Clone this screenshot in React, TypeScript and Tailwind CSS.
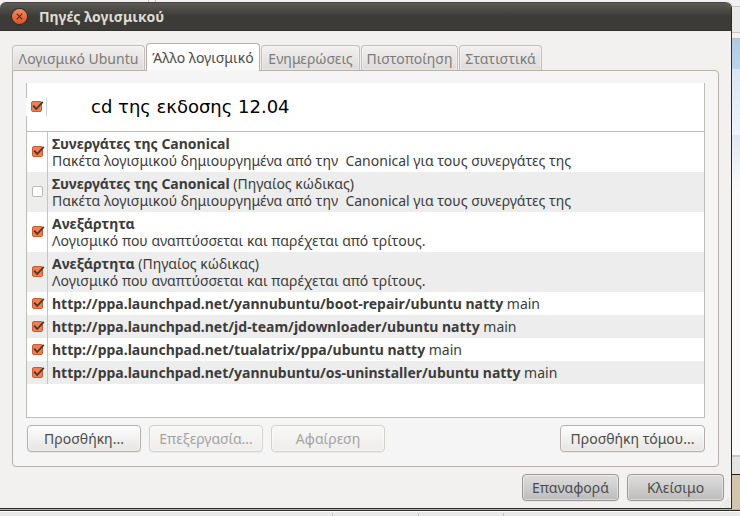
import React, { useState } from 'react';
import clsx from 'clsx';

interface Source {
  id: string;
  title: string;
  suffix?: string;
  description?: string;
  enabled: boolean;
}

const initialSources: Source[] = [
  { id: 'partner', title: 'Συνεργάτες της Canonical', description: 'Πακέτα λογισμικού δημιουργημένα από την  Canonical για τους συνεργάτες της', enabled: true },
  { id: 'partner-src', title: 'Συνεργάτες της Canonical', suffix: '(Πηγαίος κώδικας)', description: 'Πακέτα λογισμικού δημιουργημένα από την  Canonical για τους συνεργάτες της', enabled: false },
  { id: 'independent', title: 'Ανεξάρτητα', description: 'Λογισμικό που αναπτύσσεται και παρέχεται από τρίτους.', enabled: true },
  { id: 'independent-src', title: 'Ανεξάρτητα', suffix: '(Πηγαίος κώδικας)', description: 'Λογισμικό που αναπτύσσεται και παρέχεται από τρίτους.', enabled: true },
  { id: 'boot-repair', title: 'http://ppa.launchpad.net/yannubuntu/boot-repair/ubuntu natty', suffix: 'main', enabled: true },
  { id: 'jdownloader', title: 'http://ppa.launchpad.net/jd-team/jdownloader/ubuntu natty', suffix: 'main', enabled: true },
  { id: 'tualatrix', title: 'http://ppa.launchpad.net/tualatrix/ppa/ubuntu natty', suffix: 'main', enabled: true },
  { id: 'os-uninstaller', title: 'http://ppa.launchpad.net/yannubuntu/os-uninstaller/ubuntu natty', suffix: 'main', enabled: true },
];

const tabs = [
  { name: 'Λογισμικό Ubuntu', width: 'w-[133px]' },
  { name: 'Άλλο λογισμικό', width: 'w-[114px]' },
  { name: 'Ενημερώσεις', width: 'w-[99px]' },
  { name: 'Πιστοποίηση', width: 'w-[97px]' },
  { name: 'Στατιστικά', width: 'w-[83px]' },
];

interface CheckProps {
  id: string;
  checked: boolean;
  onChange: () => void;
}

const Check: React.FC<CheckProps> = ({ id, checked, onChange }) => (
  <span className="grid w-3 h-3">
    <input
      id={id}
      type="checkbox"
      checked={checked}
      onChange={onChange}
      className="[grid-area:1/1] appearance-none w-[11px] h-[11px] rounded-[2px] border border-[#bdb9b3] bg-white checked:border-[#d0592f] checked:bg-[#f37d50]"
    />
    {checked && (
      <svg viewBox="0 0 12 12" className="[grid-area:1/1] w-3 h-3 overflow-visible pointer-events-none" fill="none">
        <path d="M2.2 4.6 L5.2 8 L11.8 0.8" stroke="#3c3b37" strokeWidth="1.8" />
      </svg>
    )}
  </span>
);

interface PushButtonProps {
  children: React.ReactNode;
  className: string;
  disabled?: boolean;
}

const PushButton: React.FC<PushButtonProps> = ({ children, className, disabled }) => (
  <button
    type="button"
    disabled={disabled}
    className={clsx('h-[27px] rounded-[4px] border text-center whitespace-nowrap shadow-[inset_0_0_0_1px_#ffffff66,0_1px_1px_#0000000d]', className)}
  >
    {children}
  </button>
);

const normal = 'border-[#b4b0ab] bg-linear-to-b from-[#fdfdfd] to-[#e6e5e3] text-[#4c4c4c]';
const faded = 'border-[#d3d1ce] bg-linear-to-b from-[#f8f8f7] to-[#eeedeb] text-[#a3a3a3]';
const dark = 'border-[#9b9997] bg-linear-to-b from-[#dedede] to-[#bcbcbc] text-[#4c4c4c]';

const App: React.FC = () => {
  const [sources, setSources] = useState(initialSources);
  const [cdEnabled, setCdEnabled] = useState(true);
  const [active, setActive] = useState(1);

  const toggle = (id: string) => {
    setSources(sources.map(s => s.id === id ? { ...s, enabled: !s.enabled } : s));
  };

  return (
    <div className="min-h-screen flex flex-col bg-[#e8e8e8] font-['Noto_Sans',sans-serif] text-sm leading-[17px] text-[#3c3c3c]">
      {/* edge of the window behind */}
      <div className="h-0.5 flex bg-[#f2f1f0]">
        <span className="ml-[148px] w-2 border-x border-[#c8c6c3]" />
      </div>

      <div className="flex-1 flex bg-[#f2f1f0]">
        <main className="flex-1 min-w-0 flex flex-col rounded-t-md border-r border-b border-[#2b2a27] bg-[#f2f1ef]">
          <header className="h-[29px] flex items-center gap-3 pl-3 rounded-t-md border-t border-b border-t-[#464540] border-b-[#33322e] bg-linear-to-b from-[#5c5b55] to-[#3c3b37] to-50%">
            <button
              type="button"
              aria-label="Κλείσιμο παραθύρου"
              className="w-[15px] h-[15px] grid place-items-center rounded-full bg-linear-to-b from-[#f58a62] to-[#e1501e] shadow-[0_0_0_1px_#2f2e2a]"
            >
              <svg viewBox="0 0 7 7" className="w-[7px] h-[7px]" stroke="#4a2a1c" strokeWidth="1.1">
                <path d="M0.7 0.7 L6.3 6.3 M6.3 0.7 L0.7 6.3" />
              </svg>
            </button>
            <h1 className="font-bold text-[#dfdbd2]">Πηγές λογισμικού</h1>
          </header>

          <div className="flex-1 flex flex-col pt-3 pl-3 pr-3">
            <div role="tablist" className="flex items-end gap-px">
              {tabs.map((tab, i) => (
                <button
                  key={tab.name}
                  type="button"
                  role="tab"
                  aria-selected={i === active}
                  onClick={() => setActive(i)}
                  className={clsx(
                    'rounded-t-[4px] border border-b-0 whitespace-nowrap flex justify-center items-center',
                    tab.width,
                    i === active
                      ? 'relative -mb-px h-7 border-[#b4afa9] bg-linear-to-b from-white to-[#f9f9f9] text-[#4c4c4c]'
                      : 'h-[25px] border-[#c3bfba] bg-linear-to-b from-[#f2f1f0] to-[#dddbd8] text-[#7b7b7b] shadow-[inset_0_0_0_1px_#ffffff59]'
                  )}
                >
                  {tab.name}
                </button>
              ))}
            </div>

            <section role="tabpanel" className="flex-1 flex flex-col px-[13px] pt-3 pb-[14px] border border-[#b6b1ab] rounded-b-[4px] rounded-tr-[4px] bg-[#f5f5f5]">
              <div className="flex-1 flex flex-col border-x border-b border-[#bfbdb9] bg-white">
                <div className="h-[49px] flex items-center border-b border-[#bfbdb9]">
                  <span className="-ml-px w-[21px] h-[18px] pl-[5px] flex items-center border-r border-[#d4d4d4] bg-white">
                    <Check id="cdrom" checked={cdEnabled} onChange={() => setCdEnabled(!cdEnabled)} />
                  </span>
                  <label htmlFor="cdrom" className="pl-11 text-lg leading-[22px] text-black font-['DejaVu_Sans',sans-serif]">
                    cd της εκδοσης 12.04
                  </label>
                </div>
                <table className="w-full mb-[33px] border-separate border-spacing-0">
                  <tbody>
                    {sources.map((source) => (
                      <tr key={source.id} className="even:bg-[#ededed]">
                        <td className="w-[21px] pl-[5px] border-r border-[#c4c4c4] align-middle">
                          <Check id={source.id} checked={source.enabled} onChange={() => toggle(source.id)} />
                        </td>
                        <td className="py-[3px] pl-1">
                          <label htmlFor={source.id} className="block whitespace-pre">
                            <b>{source.title}</b>{source.suffix && ` ${source.suffix}`}
                            {source.description && <span className="block">{source.description}</span>}
                          </label>
                        </td>
                      </tr>
                    ))}
                  </tbody>
                </table>
              </div>

              <div className="flex gap-2 pt-[7px] pl-px">
                <PushButton className={clsx('w-[114px]', normal)}>Προσθήκη...</PushButton>
                <PushButton className={clsx('w-[114px]', faded)} disabled>Επεξεργασία...</PushButton>
                <PushButton className={clsx('w-[114px]', faded)} disabled>Αφαίρεση</PushButton>
                <PushButton className={clsx('w-[145px] ml-auto', normal)}>Προσθήκη τόμου...</PushButton>
              </div>
            </section>
          </div>

          <footer className="flex justify-end gap-2 pt-[7px] pl-3">
            <PushButton className={clsx('w-[97px]', dark)}>Επαναφορά</PushButton>
            <PushButton className={clsx('w-[97px] mb-[7px]', dark)}>Κλείσιμο</PushButton>
            <svg viewBox="0 0 10 10" className="w-2.5 h-2.5 self-end -ml-3 mr-px" fill="#fff" stroke="#d0cecb" strokeWidth="0.4">
              <path d="M8 0h1v1h-1z M6 2h1v1h-1z M8 3h1v1h-1z M4 4h1v1h-1z M6 5h1v1h-1z M8 6h1v1h-1z M2 6h1v1h-1z M4 7h1v1h-1z M6 8h1v1h-1z M0 8h1v1h-1z M8 9h1v1h-1z" />
            </svg>
          </footer>
        </main>

        {/* sliver of the desktop to the right of the dialog */}
        <aside className="w-2 flex flex-col">
          <div className="h-[27px] mt-1 border-y border-[#c8c6c3] bg-[#ebe9e8]" />
          <div className="h-[5px]" />
          <div className="h-[31px] border-t border-[#cdb9aa] bg-linear-to-b from-[#adcbe6] to-[#bdd4e9]" />
          <div className="h-[66px] bg-linear-to-b from-[#d8e6f3] to-[#edf4fa]" />
          <div className="h-[55px] bg-linear-to-b from-[#dfe8f2] to-[#fafafa]" />
          <div className="flex-1 bg-[#fafafa]" />
          <div className="h-5 border-t-2 border-b border-t-[#c9c7c3] border-b-[#222] bg-[#e6e4e2]" />
          <div className="h-[34px] bg-[#d3c4ae]" />
        </aside>
      </div>

      <div className="h-[7px] flex justify-center border-t border-[#b9b49f] bg-[#e8e8e8]">
        <div className="flex-1 flex border-t border-[#2b2a27] shadow-[inset_0_1px_0_#fff]">
          <span className="ml-[332px] w-[87px] mt-0.5 border-x border-[#cdc4ad]" />
          <span className="w-[85px] mt-0.5 border-r border-[#cdc4ad]" />
        </div>
      </div>
    </div>
  );
};

export default App;
